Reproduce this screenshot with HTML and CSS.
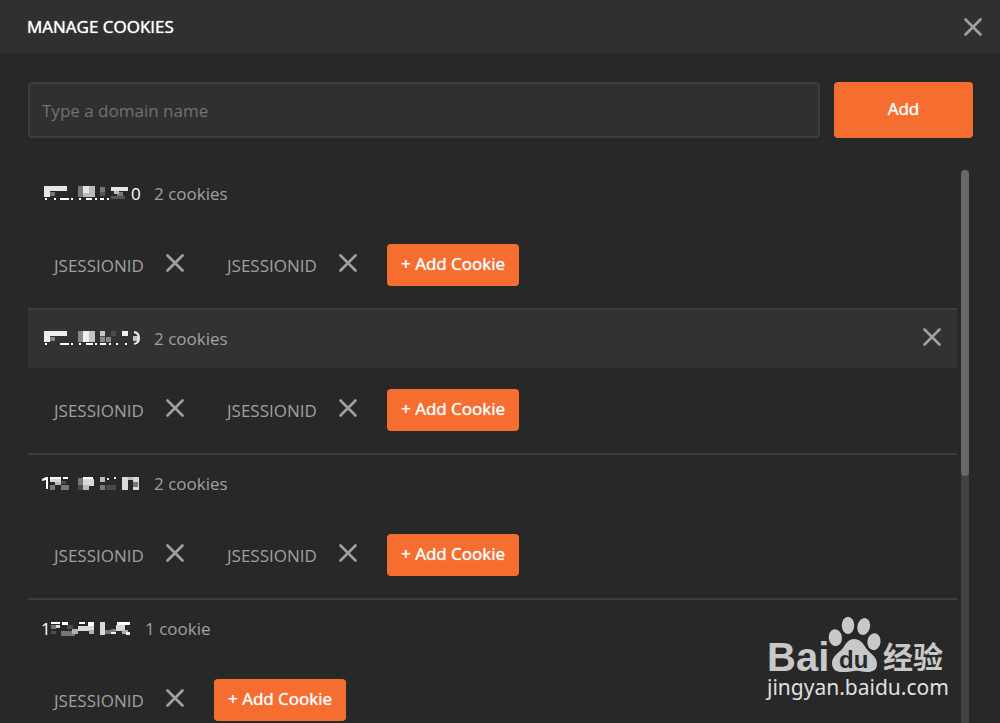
FILE: index.html
```html
<!DOCTYPE html>
<html lang="en">
<head>
<meta charset="utf-8">
<title>Manage Cookies</title>
<link rel="stylesheet" href="styles.css">
</head>
<body>
<svg class="defs" aria-hidden="true"><symbol id="close" viewBox="0 0 20 20"><path d="M2.500 2.500 17.500 17.500M17.500 2.500 2.500 17.500" fill="none" stroke="currentColor" stroke-width="2.700" stroke-linecap="round"/></symbol></svg>
<header class="header">
  <h1 class="title">MANAGE COOKIES</h1>
  <button class="close" aria-label="Close"><svg class="icon"><use href="#close"/></svg></button>
</header>
<main class="content">
  <form class="domain-form">
    <input class="domain-input" type="text" placeholder="Type a domain name" aria-label="Domain name">
    <button class="add-domain" type="button">Add</button>
  </form>
  <div class="scroll-area">
    <div class="domains">
      <section class="domain">
        <div class="domain-head">
          <svg class="address" viewBox="0 0 100 24" role="img" aria-label="Hidden address">
            <path fill="#e6e6e6" d="M2 4h23v5H8v6H2zM41 4h6v11h-6zM69 5h17v4H69z"/>
            <path fill="#777" d="M36 4h5v11h-5zM8 10h5v4H8zM75 10h6v5h-6zM58 5h5v5h-5z"/>
            <path fill="#bbb" d="M47 4h6v11h-6zM72 9h5v3h-5zM41 11h6v4h-6z"/>
            <path fill="#555" d="M58 10h5v4h-5zM69 14h14v3H69z"/>
            <path fill="#fff" d="M3 16h2v2H3zM12 16h2v2h-2zM18 16h9v2h-9zM29 16h2v2h-2zM37 16h2v2h-2zM44 16h6v2h-6zM53 16h2v2h-2zM58 16h4v2h-4zM65 16h2v2h-2z"/>
            <text x="89" y="18" class="digit">0</text>
          </svg>
          <span class="count">2 cookies</span>
        </div>
        <div class="cookies">
          <div class="cookie"><span class="cookie-name">JSESSIONID</span><button class="close" aria-label="Remove cookie"><svg class="icon"><use href="#close"/></svg></button></div>
          <div class="cookie"><span class="cookie-name">JSESSIONID</span><button class="close" aria-label="Remove cookie"><svg class="icon"><use href="#close"/></svg></button></div>
          <button class="add-cookie">+ Add Cookie</button>
        </div>
      </section>
      <section class="domain">
        <div class="domain-head active">
          <svg class="address" viewBox="0 0 100 24" role="img" aria-label="Hidden address">
            <path fill="#eee" d="M2 4h23v5H8v6H2zM41 4h6v11h-6zM80 4h6v5h-6z"/>
            <path fill="#888" d="M36 4h5v11h-5zM8 10h5v4H8zM64 10h5v5h-5zM58 10h5v5h-5z"/>
            <path fill="#c4c4c4" d="M47 4h6v11h-6zM58 4h5v5h-5zM91 9h5v5h-5z"/>
            <path fill="#4b4b4b" d="M69 4h5v5h-5zM58 9h5v1h-5z"/>
            <path fill="#fff" d="M3 16h2v2H3zM18 16h9v2h-9zM29 16h2v2h-2zM37 16h2v2h-2zM44 16h7v2h-7zM53 16h2v2h-2zM58 16h6v2h-6zM67 16h2v2h-2zM74 16h2v2h-2zM83 16h2v2h-2z"/>
            <path d="M92 5q5 1 5 6t-5 6" fill="none" stroke="#eee" stroke-width="2"/>
          </svg>
          <span class="count">2 cookies</span>
          <button class="close remove-domain" aria-label="Remove domain"><svg class="icon"><use href="#close"/></svg></button>
        </div>
        <div class="cookies">
          <div class="cookie"><span class="cookie-name">JSESSIONID</span><button class="close" aria-label="Remove cookie"><svg class="icon"><use href="#close"/></svg></button></div>
          <div class="cookie"><span class="cookie-name">JSESSIONID</span><button class="close" aria-label="Remove cookie"><svg class="icon"><use href="#close"/></svg></button></div>
          <button class="add-cookie">+ Add Cookie</button>
        </div>
      </section>
      <section class="domain">
        <div class="domain-head">
          <svg class="address" viewBox="0 0 100 24" role="img" aria-label="Hidden address">
            <path fill="#fff" d="M0 7 4 5h2v12H4V8L0 9zM8 5h11v2H8zM21 5h5v2h-5zM41 5h10v2H41z"/>
            <path fill="#d8d8d8" d="M8 7h11v3H8zM41 7h11v7H41zM80 5h6v13h-6zM91 5h6v13h-6z"/>
            <path fill="#777" d="M8 13h5v5H8zM19 13h8v5h-8zM36 6h5v7h-5zM58 13h5v5h-5zM91 10h5v5h-5z"/>
            <path fill="#bbb" d="M13 10h6v3h-6zM41 13h6v5h-6zM58 5h5v5h-5zM86 5h5v3h-5z"/>
            <path fill="#4a4a4a" d="M36 13h5v5h-5zM64 13h5v5h-5zM69 13h5v5h-5zM19 9h5v3h-5z"/>
            <path fill="#eee" d="M65 6h2v2h-2zM72 5h2v2h-2z"/>
          </svg>
          <span class="count">2 cookies</span>
        </div>
        <div class="cookies">
          <div class="cookie"><span class="cookie-name">JSESSIONID</span><button class="close" aria-label="Remove cookie"><svg class="icon"><use href="#close"/></svg></button></div>
          <div class="cookie"><span class="cookie-name">JSESSIONID</span><button class="close" aria-label="Remove cookie"><svg class="icon"><use href="#close"/></svg></button></div>
          <button class="add-cookie">+ Add Cookie</button>
        </div>
      </section>
      <section class="domain">
        <div class="domain-head">
          <svg class="address short" viewBox="0 0 91 24" role="img" aria-label="Hidden address">
            <text x="-1" y="18" class="digit">1</text>
            <path fill="#fff" d="M9 5h9v2H9zM20 5h6v3h-6zM37 5h6v2h-6zM46 5h6v5h-6zM75 5h13v3H75z"/>
            <path fill="#d8d8d8" d="M14 8h4v3h-4zM36 9h16v5H36zM58 5h5v13h-5zM74 8h9v6h-9z"/>
            <path fill="#777" d="M19 14h14v5H19zM9 8h5v4H9zM63 13h6v4h-6zM69 12h5v5h-5z"/>
            <path fill="#b0b0b0" d="M30 12h6v5h-6zM47 13h5v4h-5zM80 13h6v4h-6z"/>
            <path fill="#4d4d4d" d="M9 14h5v3H9zM25 8h6v4h-6z"/>
            <path fill="#eee" d="M69 15h5v2h-5zM84 15h4v3h-4z"/>
          </svg>
          <span class="count">1 cookie</span>
        </div>
        <div class="cookies">
          <div class="cookie"><span class="cookie-name">JSESSIONID</span><button class="close" aria-label="Remove cookie"><svg class="icon"><use href="#close"/></svg></button></div>
          <button class="add-cookie">+ Add Cookie</button>
        </div>
      </section>
    </div>
    <div class="scrollbar"><div class="thumb"></div></div>
  </div>
</main>
<svg class="watermark" viewBox="0 0 184 90" role="img" aria-label="Baidu Jingyan">
  <g fill="#c8c8c8">
    <text x="3" y="57" class="brand">Bai</text>
    <ellipse cx="71.300" cy="23.700" rx="6.600" ry="8.500" transform="rotate(-8 71.300 23.700)"/>
    <ellipse cx="84" cy="11.300" rx="6.200" ry="8.600"/>
    <ellipse cx="99.700" cy="12.500" rx="6.300" ry="8.600" transform="rotate(14 99.700 12.500)"/>
    <ellipse cx="110" cy="27.700" rx="6.600" ry="8.500" transform="rotate(8 110 27.700)"/>
    <path d="M90 25C96 25 99 29 102 34C106 40 113 42 113 50C113 56 109 58 103 58C98 58 95 56 90 57C85 58 82 58 77 58C71 58 68 54 68 49C68 42 75 39 79 34C82 29 85 25 90 25Z"/>
    <text x="119" y="54" class="brand-cn">经验</text>
  </g>
  <text x="75" y="54" class="brand-du">du</text>
  <text x="3" y="81" class="brand-url">jingyan.baidu.com</text>
</svg>
</body>
</html>
```
FILE: styles.css
```css
* { box-sizing: border-box; }
body {
  margin: 0;
  height: 100vh;
  display: flex;
  flex-direction: column;
  overflow: hidden;
  background: #282828;
  color: #fff;
  font: 17px/24px "Open Sans", sans-serif;
}
button, input { font: inherit; }
button { border: 0; padding: 0; cursor: pointer; }
.defs { position: absolute; width: 0; height: 0; }
.header {
  flex: none;
  height: 54px;
  padding: 0 17px 0 27px;
  display: flex;
  align-items: center;
  justify-content: space-between;
  background: #303030;
}
.title { margin: 0; font-size: 17px; font-weight: 400; text-shadow: 0 0 1px #fff; }
.close { display: flex; background: none; color: #a0a0a0; }
.icon { width: 20px; height: 20px; }
.content {
  flex: 1;
  min-height: 0;
  display: flex;
  flex-direction: column;
  padding: 28px 27px 0 28px;
}
.domain-form { flex: none; display: flex; gap: 14px; }
.domain-input {
  flex: 1;
  min-width: 0;
  height: 56px;
  padding: 0 12px;
  color: #fff;
  background: #303030;
  border: 2px solid #3e3e3e;
  border-radius: 4px;
}
.domain-input::placeholder { color: #727272; opacity: 1; }
.add-domain {
  width: 139px;
  padding-bottom: 2px;
  border-radius: 4px;
  background: #f66d30;
  color: #fff;
  text-shadow: 0 0 1px #fff;
}
.scroll-area {
  flex: 1;
  min-height: 0;
  display: flex;
  gap: 4px;
  margin-top: 25px;
  padding-right: 4px;
}
.domains { flex: 1; overflow: hidden; }
.domain { height: 145px; border-top: 2px solid #3e3e3e; }
.domain:first-child { border-top-color: transparent; }
.domain-head {
  height: 58px;
  padding: 0 15px 0 14px;
  display: flex;
  align-items: center;
  gap: 12px;
}
.active { background: #323232; }
.address { flex: none; width: 100px; height: 24px; overflow: visible; }
.short { width: 91px; }
.digit { font: 500 17px "Open Sans", sans-serif; fill: #fff; }
.count { color: #a0a0a0; }
.remove-domain { margin-left: auto; padding-bottom: 4px; }
.cookies { display: flex; align-items: center; height: 42px; margin-top: 21px; padding-left: 26px; }
.cookie { display: flex; align-items: center; gap: 21px; width: 173px; color: #a0a0a0; }
.cookie-name { padding-top: 2px; }
.cookie .close { padding-bottom: 4px; }
.add-cookie {
  height: 42px;
  padding: 0 14px 2px;
  margin-left: -13px;
  border-radius: 4px;
  background: #f66d30;
  color: #fff;
  text-shadow: 0 0 1px #fff;
}
.scrollbar { width: 8px; margin-top: 7px; background: #414141; border-radius: 4px 4px 0 0; }
.thumb { height: 306px; background: #686868; border-radius: 4px; }
.watermark { position: absolute; right: 52px; bottom: 19px; width: 184px; height: 90px; overflow: visible; }
.brand { font: 700 40px "Liberation Sans", sans-serif; }
.brand-du { font: 700 24px "Liberation Sans", sans-serif; fill: #282828; }
.brand-cn { font: 700 30px "Noto Sans CJK SC", sans-serif; }
.brand-url { font: 400 21px "Noto Sans", sans-serif; fill: #e0e0e0; }
```
